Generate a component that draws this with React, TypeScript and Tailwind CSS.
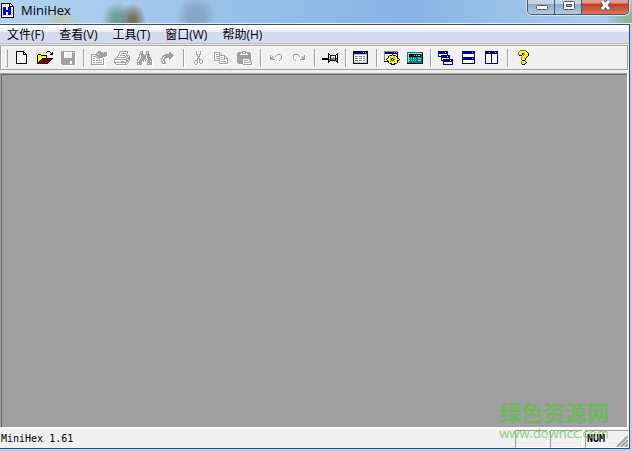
import type { ReactNode } from "react";
import { clsx } from "clsx";

const palette: Record<string, string> = {
  K: "#000000",
  W: "#ffffff",
  Y: "#ffff00",
  D: "#808000",
  R: "#7b0000",
  G: "#a0a0a0",
  S: "#808080",
  L: "#c8c8c8",
  B: "#000080",
  U: "#0000e0",
  V: "#8c8cdc",
  T: "#008080",
  C: "#7fe0e0",
};

const icons = {
  file: [
    "KKKKKKKK...",
    "KWWWWWWKK..",
    "KWWWWWWKWK.",
    "KWWWWWWKKKK",
    "KWWWWWWWWWK",
    "KWWWWWWWWWK",
    "KWWWWWWWWWK",
    "KWWWWWWWWWK",
    "KWWWWWWWWWK",
    "KWWWWWWWWWK",
    "KWWWWWWWWWK",
    "KWWWWWWWWWK",
    "KKKKKKKKKKK",
  ],
  open: [
    "..........KKK...",
    ".........K...K.K",
    "..............KK",
    ".KKK.........KKK",
    "KYYYKKKKKK......",
    "KYYYYYYYYK......",
    "KYYYYYYYYK......",
    "KYYYYKKKKKKKKKKK",
    "KYYYKRRRRRRRRRK.",
    "KYYKRRRRRRRRRK..",
    "KYKRRRRRRRRRK...",
    "KKRRRRRRRRRK....",
    "KKKKKKKKKKK.....",
  ],
  save: [
    "GGGGGGGGGGGGGG",
    "GGG........G.G",
    "GGG........GGG",
    "GGG........GGG",
    "GGG........GGG",
    "GGG........GGG",
    "GGG........GGG",
    "GGGGGGGGGGGGGG",
    "GGGGGGGGGGGGGG",
    "GGGGGGGGGGGGGG",
    "GGGGGGGGG..GGG",
    "GGGGGGGGG..GGG",
    "GGGGGGGGG..GGG",
    ".GGGGGGGGGGGGG",
  ],
  properties: [
    ".......GGG......",
    "......GGGGGG.GGG",
    ".....G.GGGGGGGGG",
    "GGGGGGG.GGGGGGGG",
    "G....GGGGGGGGGGG",
    "G.GGG.GGGGGGGGG.",
    "G....G.GGGGG....",
    "G.GG..G.G...G...",
    "G...........G...",
    "G.GG.GGGGGG.G...",
    "G...........G...",
    "G.GG.GGGGGG.G...",
    "G...........G...",
    "GGGGGGGGGGGGG...",
  ],
  print: [
    "......GGGGGGGG..",
    ".....G.......G..",
    ".....G.GGGGG.G..",
    "....G.......G...",
    "....G.GGGGG.GGG.",
    "...G.......G.G.G",
    "..GGGGGGGGGGG.GG",
    ".G...........GGG",
    "GGGGGGGGGGGGG.GG",
    "G...........GG.G",
    "G......GGG..GGG.",
    "GGGGGGGGGGGGG.G.",
    ".G.........G.G..",
    "..GGGGGGGGGGG...",
  ],
  find: [
    "...GGG...GGG...",
    "...G.G...G.G...",
    "...GGG...GGG...",
    "..GGGGG.GGGGG..",
    "..G.GGGGG.GGG..",
    "..G.GGGGG.GGG..",
    ".GG.GGGGG.GGGG.",
    ".G.GGGGGG.GGGG.",
    "GG.GGGGGGG.GGGG",
    "G.GGGGG.G.GGGGG",
    "G.GGG.G.G.GGG.G",
    "GGGGG.....GGGGG",
    "G.GGG.....G.GGG",
    "GGGGG.....GGGGG",
  ],
  goTo: [
    "........GG...",
    "........GGG..",
    "....GGGGGGGG.",
    "..GGGGGGGGGGG",
    ".GG.GGGGGGGG.",
    ".G.GGGGGGGG..",
    "GG.GG...GG...",
    "G.GG....G....",
    "G.GG.........",
    "GG.G.........",
    ".G.GG........",
    ".GGGG........",
  ],
  cut: [
    "..G...G..",
    "..G...G..",
    "..G...G..",
    "..GG.GG..",
    "...G.G...",
    "...GGG...",
    "....G....",
    "...GGG...",
    "...G.GGG.",
    ".GGG.G..G",
    "G..G.G..G",
    "G..G.G..G",
    "G..G..GG.",
    ".GG......",
  ],
  copy: [
    "GGGGGG.........",
    "G....GG........",
    "G.GG.G.G.......",
    "G....GGGGGG....",
    "G.GGGG....GG...",
    "G....G.GG.G.G..",
    "G.GGGG....GGGG.",
    "G....G.GGGG..G.",
    "GGGGGG.......G.",
    ".....G.GGGGG.G.",
    ".....G.......G.",
    ".....GGGGGGGGG.",
  ],
  paste: [
    ".....GGGG......",
    ".GGGGG..GGGGG..",
    "GGGG.GGGG.GGGG.",
    "GGG........GGG.",
    "GGGGGGGGGGGGGG.",
    "GGGGGGGGGGGGGG.",
    "GGGGGGGGGGGGGG.",
    "GGGGGGGGGGGGGG.",
    "GGGGGG......GG.",
    "GGGGGG.GGGG..G.",
    "GGGGGG.......GG",
    "GGGGGG.GGGGGG.G",
    ".GGGGG........G",
    "......GGGGGGGGG",
  ],
  undo: [
    ".......GGGG.",
    "G.....G....G",
    "G.G..G.....G",
    "GG.G.......G",
    "GGG........G",
    "GGGGG.....G.",
    ".........G..",
  ],
  redo: [
    ".GGGG.......",
    "G....G.....G",
    "G.....G..G.G",
    "G.......G.GG",
    "G........GGG",
    ".G.....GGGGG",
    "..G.........",
  ],
  pin: [
    "......K........K",
    "......KK......KK",
    "......KWKKKKKKWK",
    "......KWKWWWWKWK",
    "......KLKLLLLKLK",
    "KKKKKKKLKSSSSKSK",
    "KKKKKKKSKSSSSKSK",
    "......KSKKKKKKSK",
    "......KK......KK",
    "......K........K",
  ],
  panel: [
    "KKKKKKKKKKKKKKK",
    "KBBBBBBBBBVBVBK",
    "KBBBBBBBBBBBBBK",
    "KLLLLLLLLLLLLLK",
    "KWWWWWWWWWWWWLK",
    "KWSSSWSSSWSSWLK",
    "KWWWWWWWWWWWWLK",
    "KWSSSWSSSWSSWLK",
    "KWWWWWWWWWWWWLK",
    "KWSSSWSSSWSSWLK",
    "KWWWWWWWWWWWWLK",
    "KLLLLLLLLLLLLLK",
    "KKKKKKKKKKKKKKK",
  ],
  options: [
    "SSSSSSSSSSSSSS..",
    "SBBBBBBBBBVBVK..",
    "SBBBBBBBBBBBBK..",
    "SWWWWWWWKWWWWK..",
    "SWLLWDKKYKKDWK..",
    "SWWWKYYYYYYYKK..",
    "SWLWKYDYYYDYYK..",
    "SWWKYYYDKDYYYKK.",
    "SWKYYYDKWKDYYYYK",
    "SWWKYYYDKDYYYKK.",
    "KKKKKYDYYYDYYK..",
    "....KYYYYYYYYK..",
    ".....DKKYYKKD...",
    ".......KKKK.....",
  ],
  calculator: [
    "TTTTTTTTTTTTTTTT",
    "TCCCCCCCCCCCCCCK",
    "TCKKKKKKKKKKKKTK",
    "TCKKKKKCKCKCCKTK",
    "TCKKKKKKKKKKKKTK",
    "TCTTTTTTTTTTTTTK",
    "TCCTCTCTCTTCCCTK",
    "TCTTTTTTTTTTTTTK",
    "TCCTCTCTCTTCCCTK",
    "TCTTTTTTTTTTTTTK",
    "TTTTTTTTTTTTTTTK",
    "KKKKKKKKKKKKKKKK",
  ],
  cascade: [
    "BBBBBBBBBB.....",
    "BBBBBBBWBB.....",
    "BBBBBBBBBB.....",
    "BWWWWWWWWB.....",
    "BWWBBBBBBBBB...",
    "BBBBBBBBBWBB...",
    "...BBBBBBBBB...",
    "...BWWWWWWWB...",
    "...BWBBBBBBBBBB",
    "...BBBBBBBBBWBB",
    ".....BBBBBBBBBB",
    ".....BWWWWWWWWB",
    ".....BWWWWWWWWB",
    ".....BBBBBBBBBB",
  ],
  tileHorizontal: [
    "BBBBBBBBBBBBB",
    "BBBBBBBBBBVBB",
    "BBBBBBBBBBBBB",
    "BWWWWWWWWWWWB",
    "BWWWWWWWWWWWB",
    "BWWWWWWWWWWWB",
    "BBBBBBBBBBBBB",
    "BBBBBBBBBBVBB",
    "BBBBBBBBBBBBB",
    "BWWWWWWWWWWWB",
    "BWWWWWWWWWWWB",
    "BWWWWWWWWWWWB",
    "BBBBBBBBBBBBB",
  ],
  tileVertical: [
    "BBBBBBBBBBBBB",
    "BBBBVBBBBBVBB",
    "BBBBBBBBBBBBB",
    "BWWWWWBWWWWWB",
    "BWWWWWBWWWWWB",
    "BWWWWWBWWWWWB",
    "BWWWWWBWWWWWB",
    "BWWWWWBWWWWWB",
    "BWWWWWBWWWWWB",
    "BWWWWWBWWWWWB",
    "BWWWWWBWWWWWB",
    "BWWWWWBWWWWWB",
    "BBBBBBBBBBBBB",
  ],
  help: [
    "...DDDDDD...",
    "..DYYYYYYK..",
    ".DYYYYYYYYK.",
    ".DYYYKKYYYYK",
    ".DYYYK.DYYYK",
    "..KKK.DYYYYK",
    ".....DYYYYK.",
    "....DYYYYK..",
    "....DYYYK...",
    "....DYYYK...",
    ".....KKK....",
    "....DYYYK...",
    "....DYYYYK..",
    "....DYYYK...",
    ".....KKK....",
  ],
  app: [
    "KKKKKKKKKK...",
    "KWWWWWWWKWK..",
    "KWLWLWLWKWWK.",
    "KWWWWWWWKKKKK",
    "KWUUUWWUUUWWK",
    "KLUUUWWUUULWK",
    "KWUUUWWUUUWLK",
    "KLUUUUUUUULWK",
    "KWUUUUUUUUWLK",
    "KLUUUWWUUULWK",
    "KWUUUWWUUUWLK",
    "KWUUUWWUUUWWK",
    "KWLWLWLWLWLWK",
    "KWWWWWWWWWWWK",
    "KKKKKKKKKKKKK",
  ],
};

type IconName = keyof typeof icons;

function pathFor(rows: string[], key: string) {
  let d = "";
  rows.forEach((row, y) => {
    [...row].forEach((c, x) => {
      if (c === key) d += `M${x} ${y}h1v1h-1z`;
    });
  });
  return d;
}

function PixelIcon({ name, disabled }: { name: IconName; disabled?: boolean }) {
  const rows = icons[name];
  const width = rows[0].length;
  const height = rows.length;
  const colors = Object.keys(palette).filter((key) => rows.some((row) => row.includes(key)));

  return (
    <svg
      width={width}
      height={height}
      viewBox={`0 0 ${width} ${height}`}
      shapeRendering="crispEdges"
      className="shrink-0 overflow-visible"
      aria-hidden="true"
    >
      {disabled && <path d={pathFor(rows, "G")} fill="#ffffff" transform="translate(1 1)" />}
      {colors.map((key) => (
        <path key={key} d={pathFor(rows, key)} fill={palette[key]} />
      ))}
    </svg>
  );
}

type Tool = { icon: IconName; label: string; disabled?: boolean };

const toolGroups: Tool[][] = [
  [
    { icon: "file", label: "新建" },
    { icon: "open", label: "打开" },
    { icon: "save", label: "保存", disabled: true },
  ],
  [
    { icon: "properties", label: "属性", disabled: true },
    { icon: "print", label: "打印", disabled: true },
    { icon: "find", label: "查找", disabled: true },
    { icon: "goTo", label: "转到", disabled: true },
  ],
  [
    { icon: "cut", label: "剪切", disabled: true },
    { icon: "copy", label: "复制", disabled: true },
    { icon: "paste", label: "粘贴", disabled: true },
  ],
  [
    { icon: "undo", label: "撤销", disabled: true },
    { icon: "redo", label: "重做", disabled: true },
  ],
  [{ icon: "pin", label: "置顶" }],
  [{ icon: "panel", label: "面板" }],
  [
    { icon: "options", label: "选项" },
    { icon: "calculator", label: "计算器" },
  ],
  [
    { icon: "cascade", label: "层叠" },
    { icon: "tileHorizontal", label: "水平平铺" },
    { icon: "tileVertical", label: "垂直平铺" },
  ],
  [{ icon: "help", label: "帮助" }],
];

const menus = ["文件(F)", "查看(V)", "工具(T)", "窗口(W)", "帮助(H)"];

function CaptionButton({
  label,
  className,
  children,
}: {
  label: string;
  className?: string;
  children: ReactNode;
}) {
  return (
    <button
      type="button"
      aria-label={label}
      className={clsx("flex h-full justify-center border-[#45586f]", className)}
    >
      {children}
    </button>
  );
}

function TitleBar() {
  return (
    <header className="flex h-6 items-start justify-between border-b border-[#e3eefa] bg-[radial-gradient(ellipse_20px_14px_at_62px_23px,#bcc9a8,transparent),radial-gradient(ellipse_13px_17px_at_133px_20px,#77705f_20%,transparent),radial-gradient(ellipse_16px_18px_at_118px_20px,#6f9f98_30%,transparent),radial-gradient(ellipse_20px_20px_at_196px_16px,#86a6c8_40%,transparent),radial-gradient(ellipse_26px_26px_at_632px_24px,#8fb695_30%,transparent),linear-gradient(90deg,#b4d2ef,#a9cbed_16%,#94bfe9_40%,#86b5e4_65%,#a9caec_92%)] pr-[3px]">
      <div className="flex items-center gap-[7px] pt-[2px] pl-px">
        <PixelIcon name="app" />
        <h1 className="text-[13px] leading-4 text-black">MiniHex</h1>
      </div>
      <div className="flex h-[15px] overflow-hidden rounded-b-[5px] border border-t-0 border-[#45586f] shadow-[0_0_0_1px_#d5e5f5]">
        <CaptionButton
          label="最小化"
          className="w-[27px] border-r bg-linear-to-b from-[#c3d4e6] from-25% via-[#8fa9c6] via-30% to-[#b2cae3]"
        >
          <svg width="13" height="14" viewBox="0 0 13 14" aria-hidden="true">
            <rect x="1.5" y="5.5" width="11" height="4" rx="1" fill="#fff" stroke="#535666" />
          </svg>
        </CaptionButton>
        <CaptionButton
          label="最大化"
          className="w-[27px] border-r bg-linear-to-b from-[#c3d4e6] from-25% via-[#8fa9c6] via-30% to-[#b2cae3]"
        >
          <svg width="13" height="14" viewBox="0 0 13 14" aria-hidden="true">
            <rect x="1.5" y="1.5" width="11" height="8" rx="1" fill="#fff" stroke="#535666" />
            <rect x="4.5" y="4.5" width="5" height="2" fill="#8fa9c6" stroke="#535666" />
          </svg>
        </CaptionButton>
        <CaptionButton
          label="关闭"
          className="w-[46px] bg-linear-to-b from-[#dfa093] from-20% via-[#bf3c24] via-30% to-[#d9775a]"
        >
          <svg width="13" height="14" viewBox="0 0 13 14" aria-hidden="true">
            <path d="M3 1l7 8M10 1L3 9" stroke="#535666" strokeWidth="5" />
            <path d="M3 1l7 8M10 1L3 9" stroke="#fff" strokeWidth="3" />
          </svg>
        </CaptionButton>
      </div>
    </header>
  );
}

function MenuBar() {
  return (
    <nav className="flex h-[19px] shrink-0 items-center gap-[15px] border-b border-[#b6bccc] bg-linear-to-b from-white via-[#eef1f9] via-35% to-[#d5dbee] to-40% pt-[2px] pl-[7px] text-xs text-black">
      {menus.map((menu) => (
        <button type="button" key={menu} className="leading-4 whitespace-nowrap">
          {menu}
        </button>
      ))}
    </nav>
  );
}

function ToolBar() {
  return (
    <div
      role="toolbar"
      className="mt-px mr-px flex h-[25px] shrink-0 items-center border border-[#a0a0a0] pl-px shadow-[inset_1px_1px_0_#fff]"
    >
      <div className="mr-[3px] ml-[3px] h-[18px] w-[3px] border border-t-white border-r-[#a0a0a0] border-b-[#a0a0a0] border-l-white" />
      {toolGroups.map((group, i) => (
        <div key={group[0].icon} className="flex items-center">
          {i > 0 && <div className="mx-[3px] h-[18px] w-[2px] border-r border-l border-r-white border-l-[#a0a0a0]" />}
          {group.map((tool) => (
            <button
              type="button"
              key={tool.icon}
              title={tool.label}
              aria-label={tool.label}
              disabled={tool.disabled}
              className="flex h-[22px] w-[23px] items-center justify-center pr-[2px]"
            >
              <PixelIcon name={tool.icon} disabled={tool.disabled} />
            </button>
          ))}
        </div>
      ))}
    </div>
  );
}

function StatusBar() {
  return (
    <footer className="flex h-5 shrink-0 items-stretch gap-[2px] border-t border-white pt-px font-['DejaVu_Sans_Mono','Liberation_Mono',monospace] text-[10px] leading-[18px] text-black">
      <span className="flex-1 pl-px">MiniHex 1.61</span>
      <span className="w-[33px] border border-t-[#a0a0a0] border-r-white border-b-white border-l-[#a0a0a0]" />
      <span className="w-[33px] border border-t-[#a0a0a0] border-r-white border-b-white border-l-[#a0a0a0]" />
      <span className="flex w-11 items-center justify-between border border-t-[#a0a0a0] border-r-white border-b-white border-l-[#a0a0a0] pl-px font-bold">
        NUM
        <svg width="13" height="13" viewBox="0 0 13 13" className="self-end" aria-hidden="true">
          <path d="M1 13L13 1M5 13l8-8M9 13l4-4" stroke="#fff" strokeWidth="1" />
          <path d="M2 13L13 2M6 13l7-7M10 13l3-3" stroke="#a0a0a0" strokeWidth="2" />
        </svg>
      </span>
    </footer>
  );
}

function Watermark() {
  return (
    <div className="absolute right-[23px] bottom-[10px] flex flex-col items-center text-[#63bd4b]/75">
      <span className="text-[22px] leading-[26px] font-bold">绿色资源网</span>
      <span className="text-[13px] leading-4">www.downcc.com</span>
    </div>
  );
}

export default function App() {
  return (
    <div className="relative flex min-h-screen flex-col bg-[#b3d1f0] pb-[2px] font-['Open_Sans','Noto_Sans_CJK_SC',sans-serif]">
      <TitleBar />
      <div className="mr-[2px] flex flex-1 flex-col border-t border-r border-b border-[#3f4f62] bg-[#f0f0f0]">
        <MenuBar />
        <ToolBar />
        <div className="mt-[3px] mr-px flex flex-1 border border-r-white border-b-white border-t-[#a0a0a0] border-l-[#a0a0a0]">
          <main className="flex-1 border-t border-l border-[#696969] bg-[#a0a0a0]" />
        </div>
        <StatusBar />
      </div>
      <Watermark />
    </div>
  );
}
